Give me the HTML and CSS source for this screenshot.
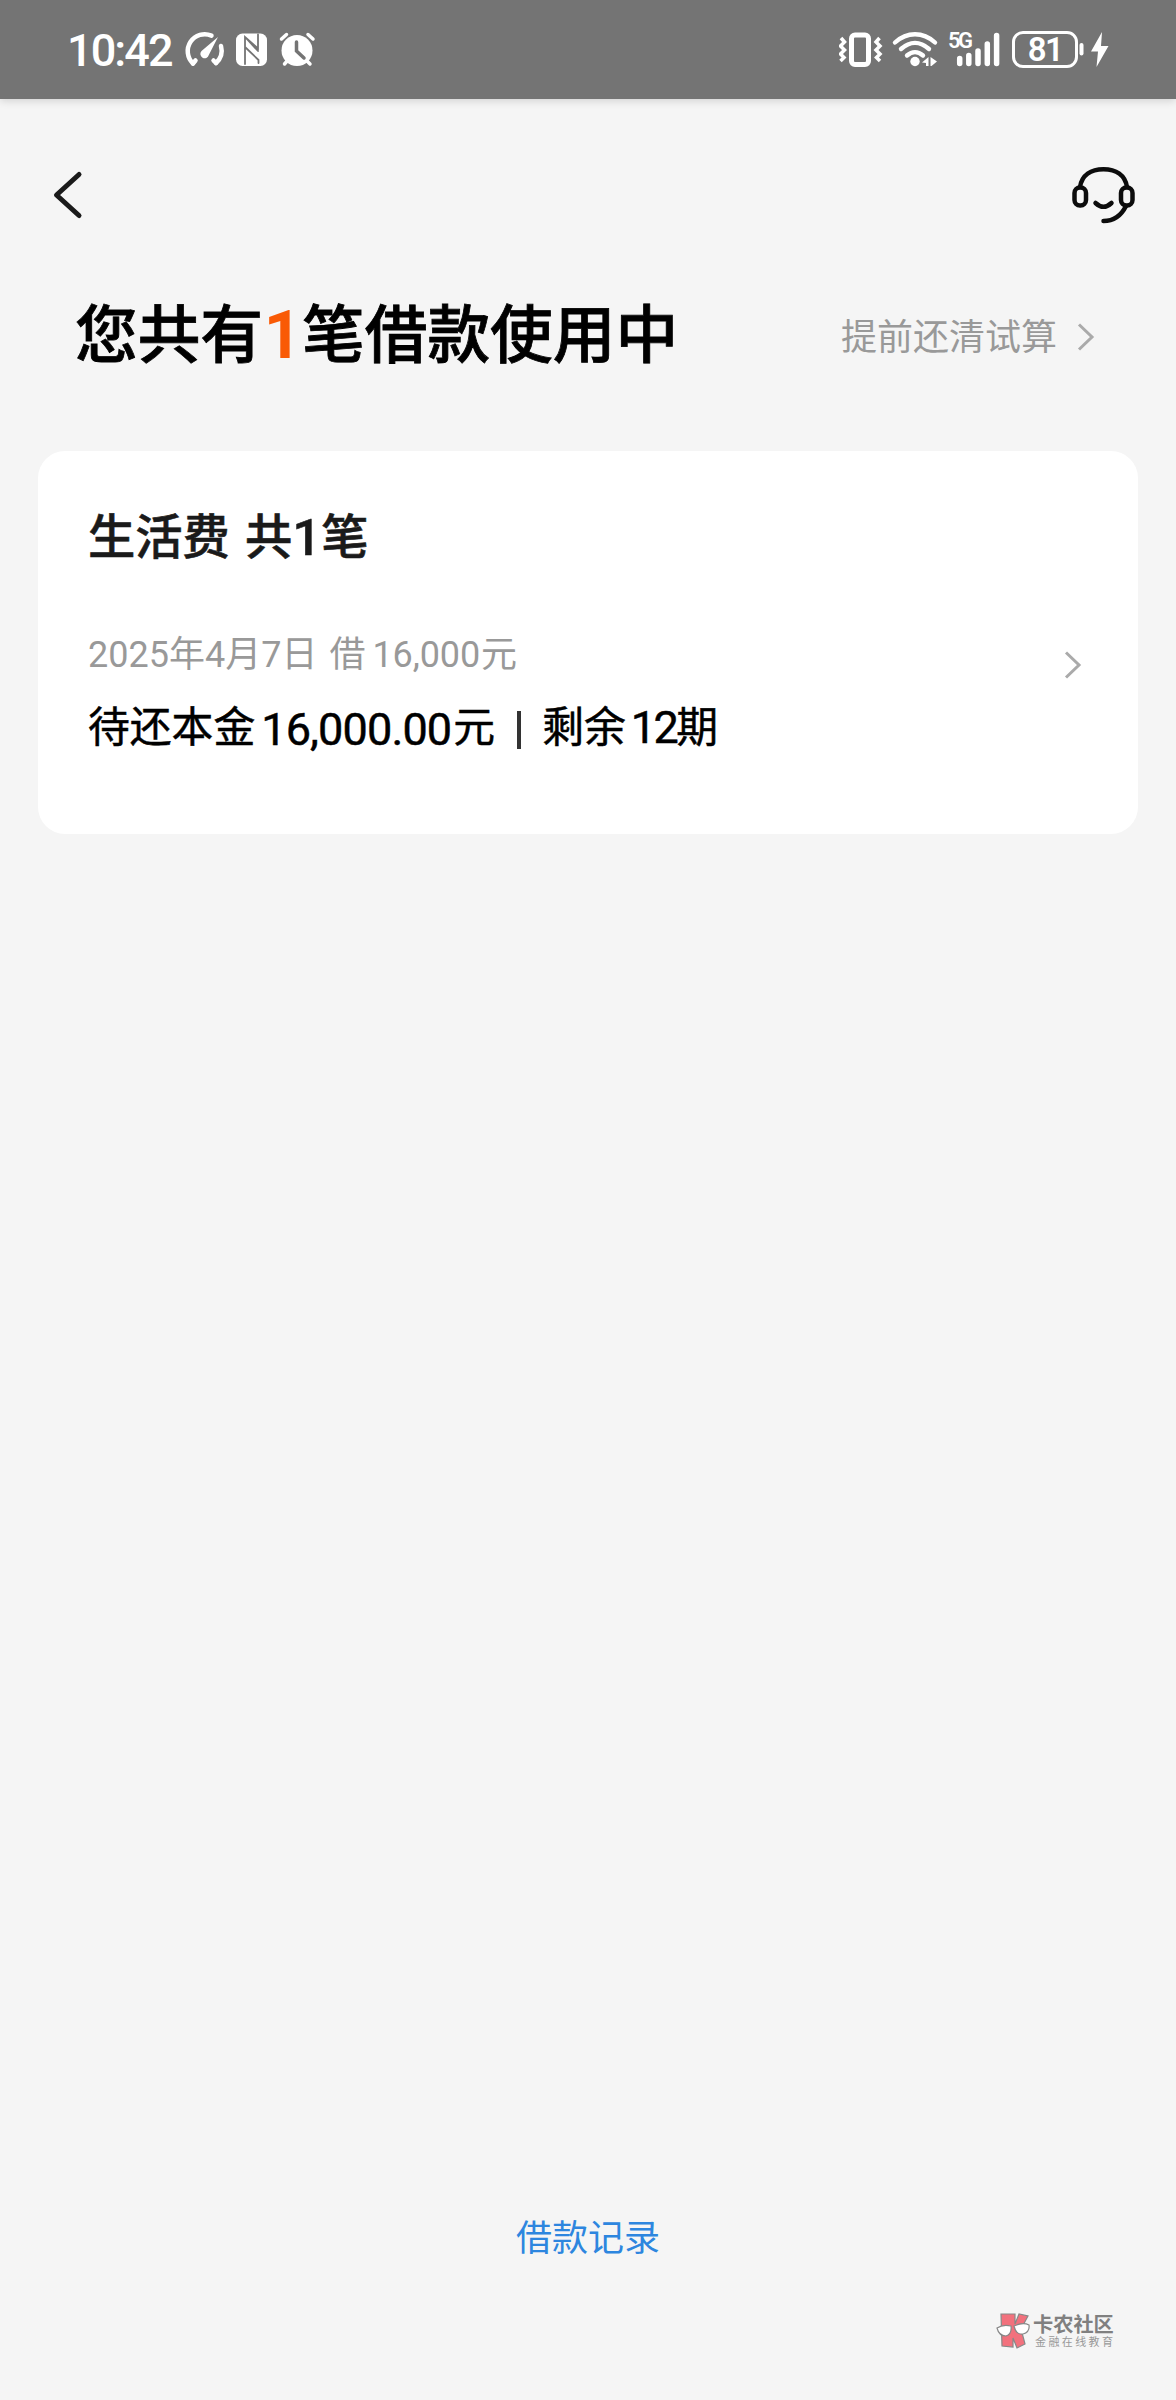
FILE: index.html
```html
<!DOCTYPE html>
<html lang="zh-CN">
<head>
<meta charset="utf-8">
<title>借款</title>
<link rel="stylesheet" href="styles.css">
</head>
<body>
<div class="screen">
  <header class="status">
    <div class="status-left">
      <span class="clock">10:42</span>
      <svg class="status-icons" width="134" height="40" viewBox="182 28 134 40" fill="none" stroke="#fff" stroke-linecap="round">
        <path d="M193 63.500A17 17 0 0 1 211.500 35.600M221 46A17 17 0 0 1 216 63" stroke-width="4.500"/>
        <path d="M193 63.500L195.500 60.500M216 63L213.500 60.500" stroke-width="4.500"/>
        <path d="M218 37L208.800 55A4.300 4.300 0 1 1 201.500 51Z" fill="#fff" stroke="none"/>
        <rect x="236" y="33.500" width="31" height="32.500" rx="6.500" fill="#fff" stroke="none"/>
        <path d="M245 64V37L258 48.500V34.500M245 47L258.500 60V63M245 37L258 51" stroke="#747474" stroke-width="1.800"/>
        <circle cx="297" cy="50.500" r="15.500" fill="#fff" stroke="none"/>
        <path d="M281.500 39L286.500 34.500M308 34.500L313 39M288 60L284.500 64M306 60L310 64" stroke-width="3.500"/>
        <path d="M296.500 42V51L304 58" stroke="#747474" stroke-width="3.500"/>
      </svg>
    </div>
    <div class="status-right">
      <svg width="100" height="40" viewBox="839 28 100 40" fill="none" stroke="#fff">
        <rect x="851.500" y="35" width="17" height="29.500" rx="3.500" stroke-width="5"/>
        <path d="M841 38L844.500 42L840.500 46L844.500 50L840.500 54L844 57.500L840.500 61M879.500 38L876 42L880 46L876 50L880 54L876.500 57.500L880 61" stroke-width="3.500"/>
        <path d="M895 42.500C907 31.500 923 31.500 935 42.500M901 49C910 41 920 41 929 49M907 55.500C912 51 918 51 923 55.500" stroke-width="4.400" stroke-linecap="round"/>
        <circle cx="915" cy="61.500" r="4.700" fill="#fff" stroke="none"/>
        <path d="M922 62.500L928.500 57V66H926V63ZM930.500 57L937 61.500L931.500 66H930.500Z" fill="#fff" stroke="none"/>
      </svg>
      <div class="signal">
        <span class="signal-label">5G</span>
        <svg width="46" height="36" viewBox="954 32 46 36" stroke="#fff" stroke-width="5.500" stroke-linecap="round">
          <path d="M958.700 58.500V63.500M967.800 55.500V63.500M977 51V63.500M986.300 44V63.500M995.600 35.500V63.500"/>
        </svg>
      </div>
      <div class="battery">81</div>
      <svg class="charge" width="28" height="40" viewBox="1080 28 28 40" fill="#fff">
        <rect x="1079.500" y="43" width="4" height="12.500" rx="2"/>
        <path d="M1102 32L1091 51.500H1098L1096.500 67L1108.500 46H1101Z"/>
      </svg>
    </div>
  </header>

  <nav class="nav">
    <svg width="32" height="52" viewBox="52 169 32 52" fill="none" stroke="#1a1a1a" stroke-width="5" stroke-linecap="round" stroke-linejoin="round"><path d="M79 174.500L56.500 195L79 215.500"/></svg>
    <svg width="66" height="64" viewBox="1070 165 66 64" fill="none" stroke="#0c0c0c" stroke-width="4.500" stroke-linecap="round">
      <rect x="1074.500" y="187.500" width="11.500" height="18" rx="5.500"/>
      <rect x="1121" y="187.500" width="11.500" height="18" rx="5.500"/>
      <path d="M1080 187C1082 175 1091 169.300 1103.500 169.300S1125 175 1127 187M1126 206C1121 216 1113 221 1103.500 221M1095.500 203Q1103.500 210.500 1111.500 203"/>
    </svg>
  </nav>

  <section class="summary">
    <h1 class="headline">您共有<span class="count">1</span>笔借款使用中</h1>
    <a class="trial">提前还清试算
      <svg class="trial-arrow" width="20" height="32" viewBox="0 0 20 32" fill="none" stroke="#aaa" stroke-width="3"><path d="M3 3.500L16 16L3 28.500"/></svg>
    </a>
  </section>

  <section class="card">
    <div class="card-body">
      <h2 class="card-title">生活费<span class="gap"></span>共<span class="num">1</span>笔</h2>
      <p class="loan-date">2025年4月7日<span class="gap"></span>借<span class="amount">16,000</span>元</p>
      <p class="loan-rest">待还本金<span class="sum">16,000.00</span>元<span class="bar"></span>剩余<span class="terms">12</span>期</p>
    </div>
    <svg class="card-arrow" width="20" height="32" viewBox="0 0 20 32" fill="none" stroke="#aaa" stroke-width="3"><path d="M3 3.500L16 16L3 28.500"/></svg>
  </section>

  <a class="records">借款记录</a>

  <footer class="brand">
    <svg width="36" height="38" viewBox="0 0 36 38" stroke="#888" stroke-width="1.200">
      <path d="M5 2H19V12L23 2L32 4L25 17L29 32L21 36L17 26V35L6 34Z" fill="#f2717d"/>
      <path d="M1 16Q7 12 15 14Q16 22 10 24Q3 24 1 16ZM18 14Q27 10 33 13Q34 20 27 22Q20 23 18 14Z" fill="#fff"/>
    </svg>
    <div class="brand-text"><span class="brand-name">卡农社区</span><span class="brand-sub">金融在线教育</span></div>
  </footer>
</div>
</body>
</html>
```
FILE: styles.css
```css
* { box-sizing: border-box; margin: 0; padding: 0; }
body { background: #f5f5f5; }
svg { display: block; flex: none; }
.screen {
  width: 1176px; height: 2400px;
  display: flex; flex-direction: column;
  background: #f5f5f5; color: #000;
  font-family: Roboto, "Noto Sans CJK SC", sans-serif;
}
.status {
  height: 99px; padding: 28px 68px 0 67px;
  display: flex; justify-content: space-between; align-items: flex-start;
  background: #747474; color: #fff;
  box-shadow: 0 2px 8px rgba(0, 0, 0, .14);
}
.status-left, .status-right { display: flex; height: 44px; }
.clock { width: 115px; padding-top: 1px; font-size: 45px; font-weight: 500; line-height: 44px; letter-spacing: -1.900px; white-space: nowrap; }
.signal { display: flex; width: 62px; padding: 4px 0 0 9px; }
.signal-label { width: 7px; font-size: 22px; line-height: 18px; font-weight: 600; white-space: nowrap; letter-spacing: -2.500px; }
.battery {
  width: 66px; height: 37px; margin: 3px 2px 0 11px;
  border: 3px solid #fff; border-radius: 11px;
  font-size: 33px; line-height: 32px; font-weight: 600; text-align: center; letter-spacing: -1.500px;
}
.charge { overflow: visible; }
.nav { height: 166px; padding: 70px 40px 0 52px; display: flex; justify-content: space-between; align-items: flex-start; }
.nav svg:last-child { margin-top: -4px; }
.summary { height: 186px; padding: 0 80px 0 75px; display: flex; justify-content: space-between; }
.headline { padding-top: 6px; font-size: 62.700px; font-weight: 500; line-height: 130px; display: flex; -webkit-text-stroke: .8px #000; }
.count { width: 39px; text-align: center; color: #f95a05; font-size: 66px; font-weight: 700; -webkit-text-stroke: 0; }
.trial { display: flex; align-items: center; gap: 19px; height: 138px; font-size: 36px; color: #999; }
.trial-arrow { margin-top: 6px; }
.card {
  width: 1100px; height: 383px; margin-left: 38px; padding: 51px 55px 0 50px;
  display: flex; justify-content: space-between;
  background: #fff; border-radius: 27px;
}
.card-body { display: flex; flex-direction: column; align-items: flex-start; }
.card-body > * { display: flex; white-space: nowrap; }
.card-title { height: 117px; font-size: 47.300px; font-weight: 500; line-height: 72px; color: #1a1a1a; -webkit-text-stroke: .6px #1a1a1a; }
.card-title .gap { width: 15px; }
.num { width: 29px; text-align: center; font-size: 50px; }
.loan-date { height: 69px; font-size: 36px; line-height: 72px; color: #999; }
.loan-date .gap { width: 12px; }
.amount { padding: 0 1px 0 7px; letter-spacing: -.1px; }
.loan-rest { font-size: 41.800px; line-height: 80px; font-weight: 400; -webkit-text-stroke: .5px #000; }
.sum { font-size: 45px; padding: 2px 2px 0 6px; letter-spacing: -.85px; }
.bar { width: 4px; height: 38px; margin: 23px 21px 0 22px; background: #333; }
.terms { font-size: 45px; padding: 0 0 0 5px; letter-spacing: -2.500px; }
.card-arrow { margin-top: 147px; }
.records { margin-top: 1377px; text-align: center; font-size: 36px; line-height: 56px; color: #2d86df; }
.brand { margin: 45px 0 0 996px; display: flex; gap: 1px; color: #808080; }
.brand-text { display: flex; flex-direction: column; padding-top: 2px; white-space: nowrap; }
.brand-name { font-size: 20.200px; line-height: 22px; font-weight: 700; }
.brand-sub { font-size: 11px; line-height: 13px; letter-spacing: 2.400px; padding-left: 2px; color: #999; }
```
